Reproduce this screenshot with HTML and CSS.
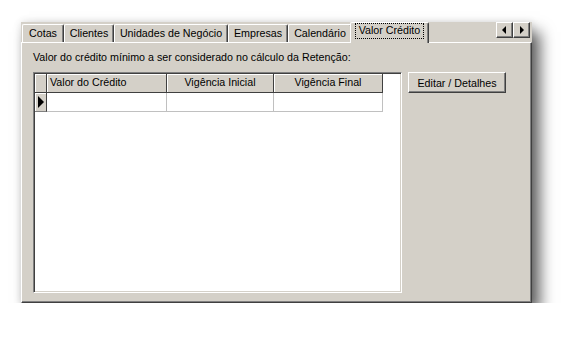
FILE: index.html
```html
<!DOCTYPE html>
<html lang="pt-BR">
<head>
    <meta charset="UTF-8">
    <title>Valor Crédito</title>
    <link rel="stylesheet" href="styles.css">
</head>
<body>

<div class="window">
    <div class="tabstrip">
        <div class="tab tab-cotas">Cotas</div>
        <div class="tab tab-clientes">Clientes</div>
        <div class="tab tab-unidades">Unidades de Negócio</div>
        <div class="tab tab-empresas">Empresas</div>
        <div class="tab tab-calendario">Calendário</div>
        <div class="tab active"><span class="focus">Valor Crédito</span></div>
        <div class="scroller">
            <div class="arrow"><span class="tri left"></span></div>
            <div class="arrow"><span class="tri right"></span></div>
        </div>
    </div>

    <div class="page">
        <p class="caption">Valor do crédito mínimo a ser considerado no cálculo da Retenção:</p>
        <div class="content">
            <div class="grid">
                <div class="grid-row header">
                    <div class="cell ind"></div>
                    <div class="cell c1">Valor do Crédito</div>
                    <div class="cell c2">Vigência Inicial</div>
                    <div class="cell c3">Vigência Final</div>
                </div>
                <div class="grid-row data">
                    <div class="cell ind"><span class="pointer"></span></div>
                    <div class="cell c1"></div>
                    <div class="cell c2"></div>
                    <div class="cell c3"></div>
                </div>
            </div>
            <button class="btn">Editar / Detalhes</button>
        </div>
    </div>
</div>

</body>
</html>
```

FILE: styles.css
```css
body {
    margin: 0;
    background-color: #fff;
    font-family: 'Liberation Sans', Arial, sans-serif;
    font-size: 10.7px;
    color: #000;
}

.window {
    margin: 22px 0 0 21px;
    width: 511px;
    height: 281px;
    background-color: #d4d0c8;
    box-shadow: 8px 10px 14px rgba(0, 0, 0, 0.62), 0 0 8px rgba(0, 0, 0, 0.12);
    display: flex;
    flex-direction: column;
}

/* tabs */

.tabstrip {
    height: 20px;
    display: flex;
    align-items: flex-end;
    padding-left: 1px;
    position: relative;
    z-index: 1;
}

.tab {
    height: 18px;
    box-sizing: border-box;
    padding-top: 2px;
    text-align: center;
    border-left: 1px solid #fff;
    border-top: 1px solid #fff;
    border-right: 1px solid #404040;
    box-shadow: inset -1px 0 0 #808080;
    border-radius: 2px 2px 0 0;
    white-space: nowrap;
}

.tab-cotas { width: 42px; }
.tab-clientes { width: 50px; }
.tab-unidades { width: 114px; }
.tab-empresas { width: 60px; }
.tab-calendario { width: 64px; }

.tab.active {
    width: 79px;
    height: 21px;
    margin: 0 -2px -1px -2px;
    padding-top: 1px;
    background-color: #d4d0c8;
}

.focus {
    display: inline-block;
    padding: 0 3px 1px 3px;
    outline: 1px dotted #000;
    line-height: 13px;
}

.scroller {
    display: flex;
    margin-left: auto;
    margin-right: 2px;
    align-self: flex-start;
}

.arrow {
    width: 17px;
    height: 16px;
    box-sizing: border-box;
    border-top: 1px solid #fff;
    border-left: 1px solid #fff;
    border-right: 1px solid #404040;
    border-bottom: 1px solid #404040;
    box-shadow: inset -1px -1px 0 #808080;
    display: flex;
    align-items: center;
    justify-content: center;
}

.tri {
    width: 0;
    height: 0;
    border-top: 4px solid transparent;
    border-bottom: 4px solid transparent;
}

.tri.left {
    border-right: 4px solid #000;
    margin-right: 1px;
}

.tri.right {
    border-left: 4px solid #000;
    margin-left: 1px;
}

/* page */

.page {
    flex: 1;
    border-top: 1px solid #fff;
    border-left: 1px solid #fff;
    border-right: 1px solid #404040;
    border-bottom: 1px solid #404040;
    box-shadow: inset -1px -1px 0 #808080;
    padding: 8px 0 0 11px;
    display: flex;
    flex-direction: column;
}

.caption {
    margin: 0 0 8px 0;
    height: 13px;
    line-height: 13px;
}

.content {
    display: flex;
    align-items: flex-start;
}

.grid {
    width: 369px;
    height: 221px;
    box-sizing: border-box;
    background-color: #fff;
    border-top: 1px solid #808080;
    border-left: 1px solid #808080;
    border-right: 1px solid #fff;
    border-bottom: 1px solid #fff;
    box-shadow: inset 1px 1px 0 #404040, inset -1px -1px 0 #d4d0c8;
    padding: 1px 0 0 1px;
}

.grid-row {
    display: flex;
}

.cell {
    box-sizing: border-box;
    white-space: nowrap;
}

.ind { width: 12px; }
.c1 { width: 120px; }
.c2 { width: 107px; }
.c3 { width: 109px; }

.header .cell {
    height: 19px;
    line-height: 17px;
    background-color: #d4d0c8;
    border-right: 1px solid #404040;
    border-bottom: 1px solid #404040;
    box-shadow: inset 1px 1px 0 #fff;
    text-align: center;
}

.header .c1 {
    text-align: left;
    padding-left: 3px;
}

.data .cell {
    height: 19px;
    border-right: 1px solid #c0c0c0;
    border-bottom: 1px solid #c0c0c0;
}

.data .ind {
    background-color: #d4d0c8;
    border-right: 1px solid #404040;
    border-bottom: 1px solid #808080;
    box-shadow: inset 1px 1px 0 #fff;
    display: flex;
    align-items: center;
    justify-content: center;
}

.pointer {
    width: 0;
    height: 0;
    border-top: 6px solid transparent;
    border-bottom: 6px solid transparent;
    border-left: 6px solid #000;
    margin-left: 1px;
}

.btn {
    margin-left: 6px;
    width: 98px;
    height: 21px;
    padding: 0;
    font-family: inherit;
    font-size: 10.7px;
    color: #000;
    background-color: #d4d0c8;
    border-top: 1px solid #fff;
    border-left: 1px solid #fff;
    border-right: 1px solid #404040;
    border-bottom: 1px solid #404040;
    box-shadow: inset -1px -1px 0 #808080;
}
```
